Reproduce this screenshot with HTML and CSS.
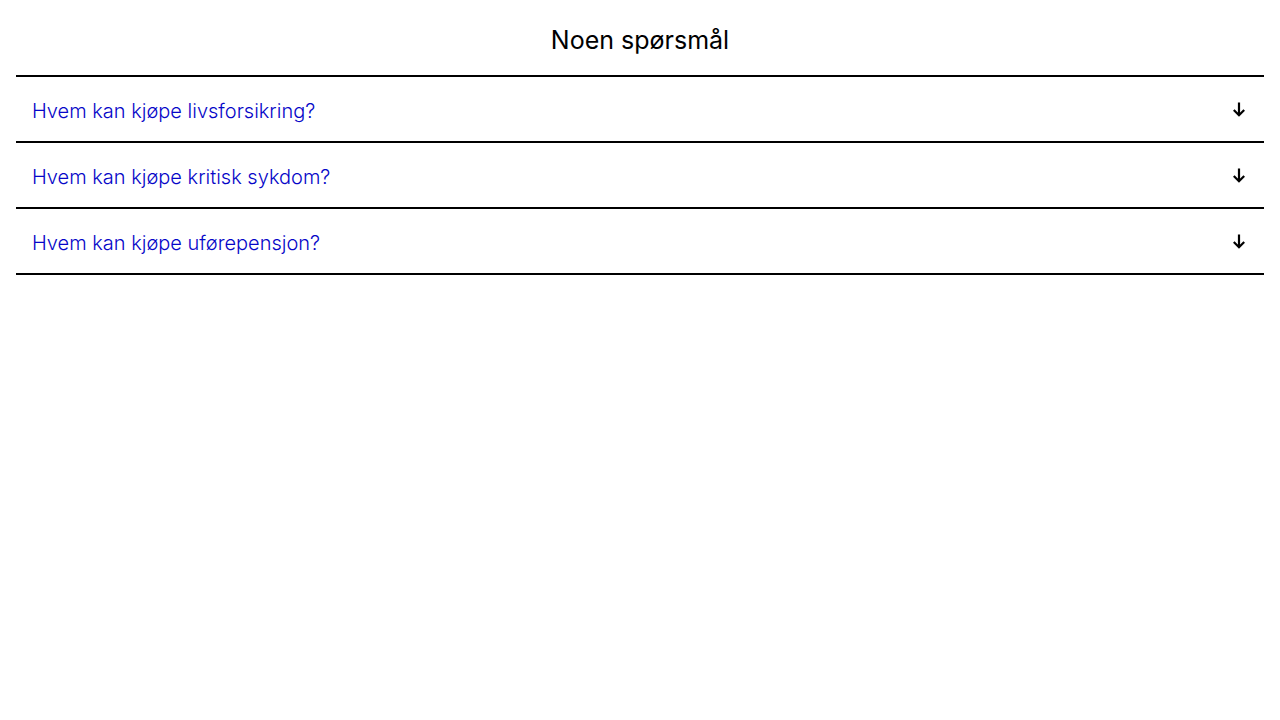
FILE: index.html
```html
<!DOCTYPE html>
<html lang="no">
<head>
<meta charset="utf-8">
<title>Noen spørsmål</title>
<link rel="stylesheet" href="styles.css">
</head>
<body>
<section class="faq">
  <h2 class="faq-title">Noen spørsmål</h2>
  <ul class="faq-list">
    <li class="faq-item">
      <button class="faq-q"><span class="faq-text">Hvem kan kjøpe livsforsikring?</span>
        <svg class="faq-icon" viewBox="0 0 14 16" width="14" height="16"><path d="M7 1.5V14M1.8 9 7 14.2 12.2 9" fill="none" stroke="#000" stroke-width="2.2"/></svg>
      </button>
    </li>
    <li class="faq-item">
      <button class="faq-q"><span class="faq-text">Hvem kan kjøpe kritisk sykdom?</span>
        <svg class="faq-icon" viewBox="0 0 14 16" width="14" height="16"><path d="M7 1.5V14M1.8 9 7 14.2 12.2 9" fill="none" stroke="#000" stroke-width="2.2"/></svg>
      </button>
    </li>
    <li class="faq-item">
      <button class="faq-q"><span class="faq-text">Hvem kan kjøpe uførepensjon?</span>
        <svg class="faq-icon" viewBox="0 0 14 16" width="14" height="16"><path d="M7 1.5V14M1.8 9 7 14.2 12.2 9" fill="none" stroke="#000" stroke-width="2.2"/></svg>
      </button>
    </li>
  </ul>
</section>
</body>
</html>
```
FILE: styles.css
```css
html, body {
  margin: 0;
  background: #fff;
}
body {
  font-family: Inter, "Liberation Sans", sans-serif;
  color: #000;
}
.faq {
  padding: 0 16px;
}
.faq-title {
  margin: 0;
  height: 75px;
  display: flex;
  align-items: center;
  justify-content: center;
  font-size: 25px;
  font-weight: 400;
  letter-spacing: 0;
  padding-top: 4px;
  box-sizing: border-box;
}
.faq-list {
  list-style: none;
  margin: 0;
  padding: 0;
  border-top: 2px solid #000;
}
.faq-item {
  border-bottom: 2px solid #000;
}
.faq-q {
  width: 100%;
  height: 64px;
  display: flex;
  align-items: center;
  justify-content: space-between;
  padding: 3px 16px 0;
  border: 0;
  background: none;
  font-family: inherit;
  font-size: 20px;
  font-weight: 300;
  color: #0606c8;
  text-align: left;
  cursor: pointer;
}
.faq-text {
  letter-spacing: 0;
}
.faq-icon {
  flex: none;
  margin-right: 2px;
  margin-top: -3px;
}
```
